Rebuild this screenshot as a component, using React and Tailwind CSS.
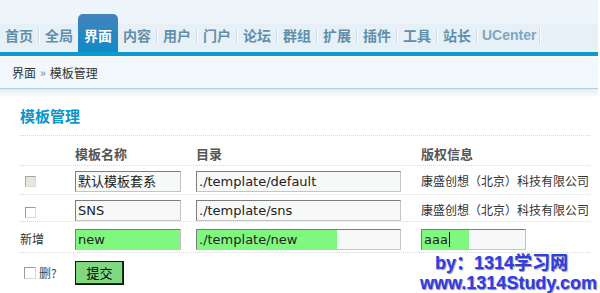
import React from "react";

const tabs = ["首页", "全局", "界面", "内容", "用户", "门户", "论坛", "群组", "扩展", "插件", "工具", "站长"];

function Sep() {
  return <span className="mb-[8px] h-[16px] w-[2px] shrink-0 border-l border-l-[#cddce7] border-r border-r-white" />;
}

function Box({ className = "" }) {
  return (
    <span
      className={
        "block w-[11px] h-[11px] border border-t-[#9a9a9a] border-l-[#9a9a9a] border-r-[#d8d8d8] border-b-[#d8d8d8] " +
        className
      }
    />
  );
}

function Field({ w, children, bg = "bg-[#f7f9f9]" }) {
  return (
    <div
      className={
        "h-[21px] border border-t-[#7d7d7d] border-l-[#7d7d7d] border-r-[#c4c4c4] border-b-[#c4c4c4] pl-[2px] text-[13px] leading-[19px] text-[#222] whitespace-nowrap overflow-hidden " +
        bg +
        " " +
        w
      }
      style={{ fontFamily: '"DejaVu Sans","Noto Sans CJK SC",sans-serif' }}
    >
      {children}
    </div>
  );
}

export default function App() {
  return (
    <div className="relative w-[600px] h-[293px] overflow-hidden bg-white font-['Noto_Sans_CJK_SC',sans-serif]">
      <div className="w-[598px]">
        {/* Header / tabs */}
        <div className="flex h-[52px] items-end bg-[linear-gradient(to_bottom,#eef5fb_24px,#e7f0f7_24px)]">
          {tabs.map((t, i) => {
            const active = t === "界面";
            const next = tabs[i + 1];
            return (
              <React.Fragment key={t}>
                {active ? (
                  <div className="flex h-[38px] w-[40px] justify-center rounded-t-[5px] bg-[linear-gradient(to_bottom,#4583bd,#0f8bc7)] pt-[11px] text-[14px] font-bold leading-[20px] text-white">
                    {t}
                  </div>
                ) : (
                  <div className="flex h-[28px] w-[38px] justify-center pt-[1px] text-[14px] font-bold leading-[20px] text-[#5f8fab]">
                    {t}
                  </div>
                )}
                {!active && next !== "界面" && <Sep />}
              </React.Fragment>
            );
          })}
          <div className="flex h-[28px] pl-[4px] pr-[3px] pt-[1px] text-[14px] font-bold leading-[20px] text-[#7ea6bf] font-['Liberation_Sans',sans-serif]">
            UCenter
          </div>
          <Sep />
        </div>
        <div className="h-[4px] bg-[#0a9bd0]" />
        {/* Breadcrumb */}
        <div className="flex h-[33px] items-center border-t border-t-white border-b border-b-[#b6cfde] bg-[#f1f7fb] pl-[12px] text-[12px] text-[#333]">
          <span>界面</span>
          <span className="mx-[4px] text-[11px] font-bold text-[#8aa2b4]">»</span>
          <span>模板管理</span>
        </div>
        <div className="h-[9px] bg-[linear-gradient(to_bottom,#e2edf5,#ffffff)]" />
        {/* Body */}
        <div className="px-[20px] pr-[8px]">
          <div className="h-[38px] border-b border-dotted border-b-[#c6def0] pt-[8px] text-[15px] font-bold leading-[20px] text-[#0b95c9]">
            模板管理
          </div>
          {/* header row */}
          <div className="flex h-[30px] border-b border-dotted border-b-[#c6def0] pt-[10px] text-[13px] font-bold leading-[16px] text-[#555]">
            <div className="w-[55px]" />
            <div className="w-[121px]">模板名称</div>
            <div className="w-[225px]">目录</div>
            <div>版权信息</div>
          </div>
          {/* row 1 */}
          <div className="flex h-[29px] items-start border-b border-dotted border-b-[#c6def0] pt-[5px]">
            <div className="w-[55px] pl-[5px] pt-[5px]">
              <Box className="bg-[#e8e6de] border-t-[#aaa89c] border-l-[#aaa89c] border-r-[#cfcdc3] border-b-[#cfcdc3]" />
            </div>
            <div className="w-[121px]">
              <Field w="w-[106px]">默认模板套系</Field>
            </div>
            <div className="w-[225px]">
              <Field w="w-[205px]">./template/default</Field>
            </div>
            <div className="pt-[1px] text-[12px] leading-[18px] text-[#333] whitespace-nowrap">康盛创想（北京）科技有限公司</div>
          </div>
          {/* row 2 */}
          <div className="flex h-[27px] items-start border-b border-dotted border-b-[#c6def0] pt-[5px]">
            <div className="w-[55px] pl-[5px] pt-[7px]">
              <Box className="bg-white" />
            </div>
            <div className="w-[121px]">
              <Field w="w-[106px]">SNS</Field>
            </div>
            <div className="w-[225px]">
              <Field w="w-[205px]">./template/sns</Field>
            </div>
            <div className="pt-[1px] text-[12px] leading-[18px] text-[#333] whitespace-nowrap">康盛创想（北京）科技有限公司</div>
          </div>
          {/* row 3 */}
          <div className="flex h-[31px] items-start border-b border-dotted border-b-[#c6def0] pt-[7px]">
            <div className="w-[55px] pt-[1px] text-[12px] leading-[18px] text-[#333]">新增</div>
            <div className="w-[121px]">
              <Field w="w-[106px] border-t-[#2d6a2d] border-l-[#2d6a2d] border-r-[#9fcf9f] border-b-[#9fcf9f]" bg="bg-[#80f880]">
                new
              </Field>
            </div>
            <div className="w-[225px]">
              <Field w="w-[205px] border-l-[#2d6a2d]" bg="bg-[linear-gradient(to_right,#80f880_140px,#f7f9f9_140px)]">
                ./template/new
              </Field>
            </div>
            <div>
              <Field w="w-[105px] border-l-[#2d6a2d]" bg="bg-[linear-gradient(to_right,#80f880_47px,#f7f9f9_47px)]">
                <span className="inline-flex items-center">
                  aaa<span className="ml-[1px] inline-block h-[15px] w-[1px] bg-black" />
                </span>
              </Field>
            </div>
          </div>
          {/* submit row */}
          <div className="flex items-start pt-[8px]">
            <div className="flex w-[55px] items-center pl-[4px] pt-[5px]">
              <Box className="h-[12px] w-[12px] bg-white" />
              <span className="ml-[3px] text-[12px] leading-[14px] text-[#444]">删?</span>
            </div>
            <div className="flex h-[24px] w-[49px] items-center justify-center border border-[#111] bg-[#80d880] text-[13px] text-black shadow-[inset_-1px_-1px_0_#1c3a1c]">
              提交
            </div>
          </div>
        </div>
      </div>
      {/* watermark */}
      <div className="absolute left-[420px] top-[253px] flex w-[178px] flex-col items-start font-['Liberation_Sans','Noto_Sans_CJK_SC',sans-serif] text-[18px] font-bold leading-[20px] text-[#2f3de6] [text-shadow:1px_1px_1px_#8888a0]">
        <span className="ml-[15px] whitespace-pre">by：1314学习网</span>
        <span className="whitespace-nowrap">www.1314Study.com</span>
      </div>
    </div>
  );
}
